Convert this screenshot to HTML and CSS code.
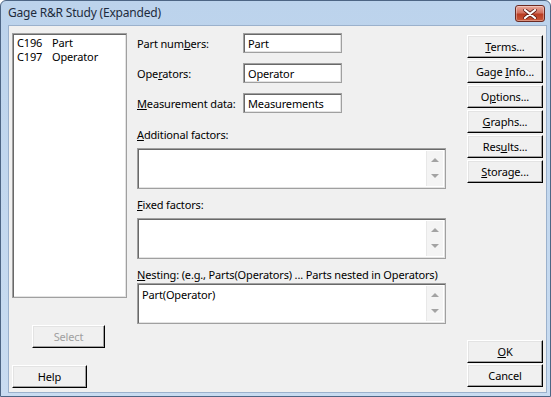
FILE: index.html
```html
<!DOCTYPE html>
<html lang="en">
<head>
    <meta charset="UTF-8">
    <title>Gage R&amp;R Study (Expanded)</title>
    <link rel="stylesheet" href="styles.css">
</head>
<body>
    <div class="window">
        <div class="titlebar">
            <span class="title">Gage R&amp;R Study (Expanded)</span>
            <div class="close-btn">
                <svg width="14" height="10" viewBox="0 0 14 10">
                    <path d="M2 1 L12 9 M12 1 L2 9" stroke="#5a1a14" stroke-width="3.6" stroke-linecap="round"/>
                    <path d="M2 1 L12 9 M12 1 L2 9" stroke="#fff" stroke-width="2.2" stroke-linecap="round"/>
                </svg>
            </div>
        </div>

        <div class="client">
            <div class="col-left">
                <div class="listbox">
                    <div class="list-item"><span class="col-id">C196</span>Part</div>
                    <div class="list-item"><span class="col-id">C197</span>Operator</div>
                </div>
                <button class="btn btn-select" disabled>Select</button>
                <button class="btn btn-help">Help</button>
            </div>

            <div class="col-mid">
                <div class="field-row">
                    <label class="field-label">Part num<u>b</u>ers:</label>
                    <div class="textbox">Part</div>
                </div>
                <div class="field-row">
                    <label class="field-label">Ope<u>r</u>ators:</label>
                    <div class="textbox">Operator</div>
                </div>
                <div class="field-row">
                    <label class="field-label"><u>M</u>easurement data:</label>
                    <div class="textbox">Measurements</div>
                </div>

                <label class="area-label first"><u>A</u>dditional factors:</label>
                <div class="textarea">
                    <div class="area-text"></div>
                    <div class="scroll"><span class="arr up"></span><span class="arr down"></span></div>
                </div>

                <label class="area-label"><u>F</u>ixed factors:</label>
                <div class="textarea">
                    <div class="area-text"></div>
                    <div class="scroll"><span class="arr up"></span><span class="arr down"></span></div>
                </div>

                <label class="area-label nesting"><u>N</u>esting: (e.g., Parts(Operators) ... Parts nested in Operators)</label>
                <div class="textarea">
                    <div class="area-text">Part(Operator)</div>
                    <div class="scroll"><span class="arr up"></span><span class="arr down"></span></div>
                </div>
            </div>

            <div class="col-right">
                <div class="btn-stack">
                    <button class="btn"><u>T</u>erms...</button>
                    <button class="btn">Gage <u>I</u>nfo...</button>
                    <button class="btn">O<u>p</u>tions...</button>
                    <button class="btn"><u>G</u>raphs...</button>
                    <button class="btn">Res<u>u</u>lts...</button>
                    <button class="btn"><u>S</u>torage...</button>
                </div>
                <div class="btn-stack bottom">
                    <button class="btn"><u>O</u>K</button>
                    <button class="btn">Cancel</button>
                </div>
            </div>
        </div>
    </div>
</body>
</html>
```

FILE: styles.css
```css
* {
    margin: 0;
    padding: 0;
    box-sizing: border-box;
}

body {
    width: 551px;
    height: 397px;
    overflow: hidden;
    font-family: 'Noto Sans', sans-serif;
    font-size: 11px;
    letter-spacing: -0.15px;
    color: #000;
}

.window {
    width: 551px;
    height: 397px;
    display: flex;
    flex-direction: column;
    background: linear-gradient(#bcd3ec, #c9dcf1);
    border: 1px solid #4d6584;
    border-radius: 6px 6px 0 0;
    padding: 0 3px 3px 7px;
}

.titlebar {
    height: 24px;
    display: flex;
    align-items: flex-start;
    justify-content: space-between;
    flex-shrink: 0;
}

.title {
    font-size: 12px;
    line-height: 24px;
    color: #1e2b3c;
    letter-spacing: -0.2px;
}

.close-btn {
    width: 30px;
    height: 17px;
    margin-top: 4px;
    margin-right: 2px;
    border: 1px solid #6b2a22;
    border-radius: 3px;
    background: linear-gradient(#e9a99c, #d2715f 45%, #b93c22 55%, #c9583a);
    display: flex;
    align-items: center;
    justify-content: center;
    box-shadow: inset 0 0 0 1px rgba(255, 255, 255, 0.35);
}

.client {
    flex: 1;
    display: flex;
    background: #f0f0f0;
    border: 1px solid #9bb1cc;
    padding: 7px 0 0 3px;
}

/* left column */
.col-left {
    width: 115px;
    display: flex;
    flex-direction: column;
}

.listbox {
    height: 265px;
    background: #fff;
    border: 1px solid #a0a0a0;
    box-shadow: inset 1px 1px #696969, inset -1px -1px #e3e3e3;
    padding: 2px 4px;
}

.list-item {
    line-height: 14px;
}

.col-id {
    display: inline-block;
    width: 35px;
}

.btn {
    width: 76px;
    height: 23px;
    background: #f0f0f0;
    border: 1px solid;
    border-color: #fff #000 #000 #fff;
    box-shadow: inset -1px -1px #a0a0a0, inset 1px 1px #e3e3e3;
    font-family: 'Noto Sans', sans-serif;
    font-size: 11px;
    letter-spacing: -0.15px;
    color: #000;
}

.btn u {
    text-underline-offset: 1px;
}

.btn-select {
    width: 73px;
    margin: 27px 0 0 20px;
    color: #a0a0a0;
}

.btn-help {
    width: 75px;
    margin-top: 17px;
}

/* middle column */
.col-mid {
    width: 309px;
    margin-left: 10px;
    display: flex;
    flex-direction: column;
}

.field-row {
    display: flex;
    align-items: center;
    height: 20px;
    margin-bottom: 10px;
}

.field-label {
    width: 106px;
}

.textbox {
    width: 99px;
    height: 20px;
    background: #fff;
    border: 1px solid #a0a0a0;
    box-shadow: inset 1px 1px #696969, inset -1px -1px #e3e3e3;
    padding: 2px 4px;
    line-height: 15px;
}

.area-label {
    line-height: 15px;
    margin-bottom: 6px;
}

.area-label.first {
    margin-top: 4px;
}

.area-label.nesting {
    margin-bottom: 1px;
    white-space: nowrap;
}

.textarea {
    height: 41px;
    display: flex;
    background: #fff;
    border: 1px solid #a0a0a0;
    box-shadow: inset 1px 1px #696969, inset -1px -1px #e3e3e3;
    padding: 2px;
    margin-bottom: 8px;
}

.area-text {
    flex: 1;
    padding: 1px 2px;
    line-height: 15px;
}

.scroll {
    width: 17px;
    background: #f4f4f4;
    border-left: 1px solid #e8e8e8;
    display: flex;
    flex-direction: column;
    align-items: center;
    justify-content: space-between;
    padding: 7px 0 8px;
}

.arr {
    width: 0;
    height: 0;
    border-left: 4px solid transparent;
    border-right: 4px solid transparent;
}

.arr.up {
    border-bottom: 4px solid #a3a3a3;
}

.arr.down {
    border-top: 4px solid #a3a3a3;
}

/* right column */
.col-right {
    width: 76px;
    margin-left: 21px;
    display: flex;
    flex-direction: column;
    justify-content: space-between;
    padding-bottom: 5px;
}

.btn-stack {
    display: flex;
    flex-direction: column;
    gap: 2px;
    margin-top: 2px;
}

.btn-stack .btn {
    width: 76px;
    height: 23px;
}

.btn-stack.bottom {
    gap: 1px;
}
```
